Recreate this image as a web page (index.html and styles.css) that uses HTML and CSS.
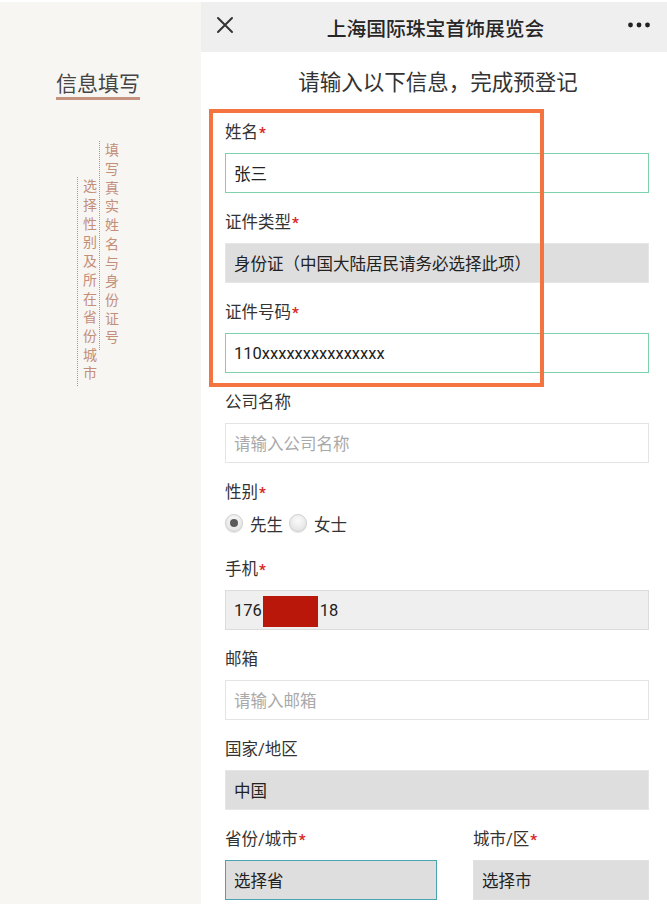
FILE: index.html
```html
<!DOCTYPE html>
<html lang="zh-CN">
<head>
<meta charset="utf-8">
<title>上海国际珠宝首饰展览会</title>
<link rel="stylesheet" href="styles.css">
</head>
<body>
<div class="page">
  <aside class="side">
    <h2 class="side-title">信息填写</h2>
    <div class="tips">
      <p class="tip tip-2">选择性别及所在省份城市</p>
      <p class="tip tip-1">填写真实姓名与身份证号</p>
    </div>
  </aside>
  <main class="phone">
    <header class="bar">
      <svg class="bar-close" width="18" height="18" viewBox="0 0 18 18"><path d="M2 2 L16 16 M16 2 L2 16" stroke="#333" stroke-width="2" fill="none" stroke-linecap="round"/></svg>
      <h1 class="bar-title">上海国际珠宝首饰展览会</h1>
      <svg class="bar-more" width="24" height="8" viewBox="0 0 24 8"><circle cx="3.5" cy="4" r="2.4" fill="#222"/><circle cx="12" cy="4" r="2.4" fill="#222"/><circle cx="20.5" cy="4" r="2.4" fill="#222"/></svg>
    </header>
    <section class="content">
      <div class="highlight"></div>
      <p class="intro">请输入以下信息，完成预登记</p>
      <div class="field">
        <div class="label">姓名<span class="req">*</span></div>
        <div class="input input-active">张三</div>
      </div>
      <div class="field">
        <div class="label">证件类型<span class="req">*</span></div>
        <div class="input input-select">身份证（中国大陆居民请务必选择此项）</div>
      </div>
      <div class="field">
        <div class="label">证件号码<span class="req">*</span></div>
        <div class="input input-active">110xxxxxxxxxxxxxxx</div>
      </div>
      <div class="field">
        <div class="label">公司名称</div>
        <div class="input input-empty">请输入公司名称</div>
      </div>
      <div class="field field-gender">
        <div class="label">性别<span class="req">*</span></div>
        <div class="radios">
          <span class="radio radio-on"></span><span class="radio-text">先生</span>
          <span class="radio"></span><span class="radio-text">女士</span>
        </div>
      </div>
      <div class="field">
        <div class="label">手机<span class="req">*</span></div>
        <div class="input input-phone">176<span class="redact"></span>18</div>
      </div>
      <div class="field">
        <div class="label">邮箱</div>
        <div class="input input-empty">请输入邮箱</div>
      </div>
      <div class="field">
        <div class="label">国家/地区</div>
        <div class="input input-select">中国</div>
      </div>
      <div class="field-row">
        <div class="field">
          <div class="label">省份/城市<span class="req">*</span></div>
          <div class="input input-select input-focus">选择省</div>
        </div>
        <div class="field">
          <div class="label">城市/区<span class="req">*</span></div>
          <div class="input input-select input-plain">选择市</div>
        </div>
      </div>
    </section>
  </main>
</div>
</body>
</html>
```
FILE: styles.css
```css
html, body {
  margin: 0;
  padding: 0;
  background: #ffffff;
}
body {
  width: 667px;
  height: 904px;
  overflow: hidden;
  font-family: Roboto, "Noto Sans CJK SC", sans-serif;
  color: #333;
}
.page {
  display: flex;
  margin-top: 2px;
  height: 902px;
}
.side {
  width: 201px;
  flex: none;
  background: #f7f6f3;
}
.side-title {
  display: inline-block;
  margin: 70px 0 0 56px;
  padding: 0 0 1px 0;
  font-size: 21px;
  line-height: 24px;
  font-weight: normal;
  color: #444;
  border-bottom: 3px solid #c3937f;
}
.tips {
  display: flex;
  align-items: flex-start;
  gap: 3px;
  margin: 41px 0 0 77px;
}
.tip {
  margin: 0;
  writing-mode: vertical-rl;
  font-size: 14px;
  line-height: 15px;
  letter-spacing: 4.7px;
  color: #c48f79;
  border-left: 1px dotted #c48f79;
  padding: 2px 0 1px 3px;
}
.tip-2 {
  margin-top: 36px;
}
.phone {
  flex: 1;
  background: #fff;
  display: flex;
  flex-direction: column;
  min-height: 0;
}
.bar {
  flex: none;
  height: 50px;
  background: #efefef;
  display: flex;
  align-items: center;
}
.bar-close {
  margin-left: 15px;
  margin-top: -4px;
}
.bar-title {
  flex: 1;
  margin: 0;
  text-align: center;
  font-size: 19.8px;
  font-weight: 500;
  color: #262626;
  padding-left: 10px;
}
.bar-more {
  margin-right: 16px;
  margin-top: -4px;
}
.content {
  flex: none;
  position: relative;
  padding: 0 18px 0 24px;
}
.highlight {
  position: absolute;
  left: 8px;
  top: 57px;
  width: 335px;
  height: 278px;
  box-sizing: border-box;
  border: 4px solid #f37341;
  pointer-events: none;
}
.intro {
  margin: 16px 0 23px;
  text-align: center;
  font-size: 21.5px;
  line-height: 30px;
  color: #333;
  padding-left: 2px;
}
.field {
  margin-bottom: 18px;
}
.label {
  font-size: 16.5px;
  line-height: 24px;
  color: #333;
  margin-bottom: 8px;
}
.req {
  color: #d8261d;
  font-size: 15px;
  font-weight: bold;
  margin-left: 1px;
}
.input {
  height: 40px;
  box-sizing: border-box;
  display: flex;
  align-items: center;
  padding-left: 8px;
  font-size: 16.5px;
  color: #222;
  border: 1px solid #e2e2e2;
  background: #fff;
}
.input-active {
  border: 1.5px solid #7dd1ad;
}
.input-select {
  background: #dedede;
  border-color: #e6e6e6;
}
.input-empty {
  color: #a9a9a9;
  border: 1.5px solid #e4e4e4;
}
.input-phone {
  background: #efefef;
  border-color: #dcdcdc;
}
.redact {
  display: inline-block;
  width: 55px;
  height: 31px;
  background: #ba170b;
  margin: 3px 2px 0 1px;
}
.input-focus {
  border: 1.5px solid #4aa3b3;
}
.input-plain {
  border-color: #e1e1e1;
}
.field-gender {
  margin-bottom: 25px;
}
.radios {
  display: flex;
  align-items: center;
  height: 20px;
  font-size: 16.5px;
  color: #333;
}
.radio {
  width: 18px;
  height: 18px;
  box-sizing: border-box;
  border-radius: 50%;
  border: 1px solid #d0d0d0;
  background: radial-gradient(circle at 50% 35%, #fbfbfb 0%, #e6e6e6 70%, #d8d8d8 100%);
  box-shadow: 0 1px 1px rgba(0,0,0,0.12);
  display: flex;
  align-items: center;
  justify-content: center;
}
.radio-on::after {
  content: "";
  width: 8px;
  height: 8px;
  border-radius: 50%;
  background: #5a5a5a;
}
.radio-text {
  margin: 2px 6px 0 7px;
}
.field-row {
  display: grid;
  grid-template-columns: 212px 176px;
  column-gap: 36px;
}
```
